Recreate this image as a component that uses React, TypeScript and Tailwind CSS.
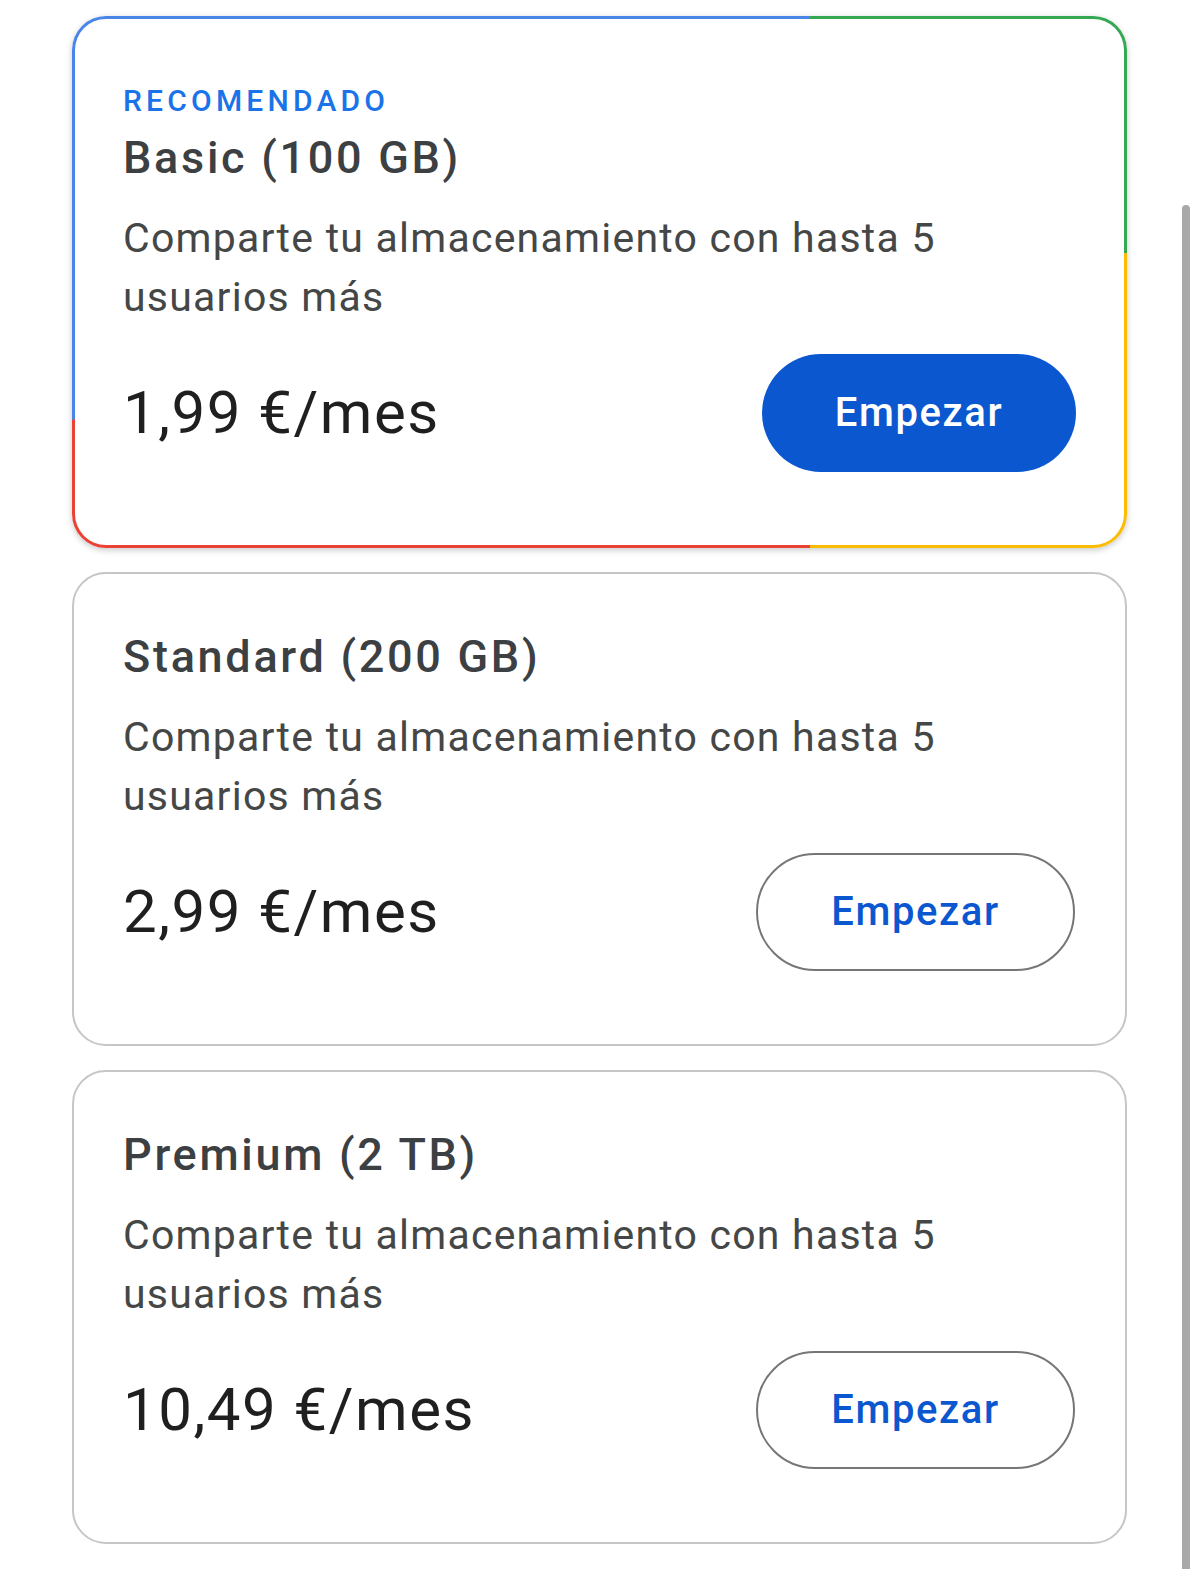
const PLANS = [
  { name: 'Standard (200 GB)', price: '2,99 €/mes' },
  { name: 'Premium (2 TB)', price: '10,49 €/mes' },
]

const DESC = 'Comparte tu almacenamiento con hasta 5 usuarios más'

function PriceRow({ price, primary }: { price: string; primary?: boolean }) {
  return (
    <div className="mt-[27px] h-[118px] flex items-center justify-between">
      <div className="text-[60px] leading-none tracking-[0.025em] text-[#1f1f1f]">{price}</div>
      {primary ? (
        <button className="w-[314px] h-[118px] rounded-full bg-[#0b57d0] text-white text-[40px] font-medium tracking-[0.04em]">
          Empezar
        </button>
      ) : (
        <button className="w-[319px] h-[118px] rounded-full border-2 border-[#747775] bg-white text-[#0b57d0] text-[40px] font-medium tracking-[0.04em]">
          Empezar
        </button>
      )}
    </div>
  )
}

function Body({ name }: { name: string }) {
  return (
    <>
      <div className="text-[45px] leading-[54px] font-medium tracking-[0.06em] text-[#3c4043]">{name}</div>
      <p className="mt-[24px] w-[860px] text-[41px] leading-[59px] tracking-[0.03em] text-[#444746]">{DESC}</p>
    </>
  )
}

export default function App() {
  return (
    <div className="w-[1200px] h-[1569px] bg-white flex [font-family:Roboto,'Noto_Sans',sans-serif]">
      <div className="w-[1127px] pl-[72px] pt-[16px] flex flex-col gap-[24px] shrink-0">
        {/* recommended plan, Google-coloured border */}
        <div className="rounded-[34px] p-[3px] shadow-[0_2px_6px_rgba(0,0,0,0.22)] [background:conic-gradient(from_0deg_at_738px_287px,#34a853_0deg_81deg,#fbbc04_81deg_180deg,#ea4335_180deg_261deg,#4a86e8_261deg_360deg)]">
          <div className="rounded-[31px] bg-white pl-[48px] pr-[48px] pt-[64px] pb-[73px]">
            <div className="text-[30px] leading-[36px] font-medium tracking-[0.14em] text-[#1a73e8]">RECOMENDADO</div>
            <div className="mt-[12px]">
              <Body name="Basic (100 GB)" />
            </div>
            <PriceRow price="1,99 €/mes" primary />
          </div>
        </div>

        {PLANS.map(p => (
          <div key={p.name} className="rounded-[34px] border-2 border-[#c4c7c5] bg-white pl-[49px] pr-[50px] pt-[56px] pb-[73px]">
            <Body name={p.name} />
            <PriceRow price={p.price} />
          </div>
        ))}
      </div>

      {/* scrollbar */}
      <div className="ml-[55px] mt-[205px] w-[8px] flex-1 max-w-[8px] rounded-t-full bg-[#a8a8a8]" />
    </div>
  )
}
